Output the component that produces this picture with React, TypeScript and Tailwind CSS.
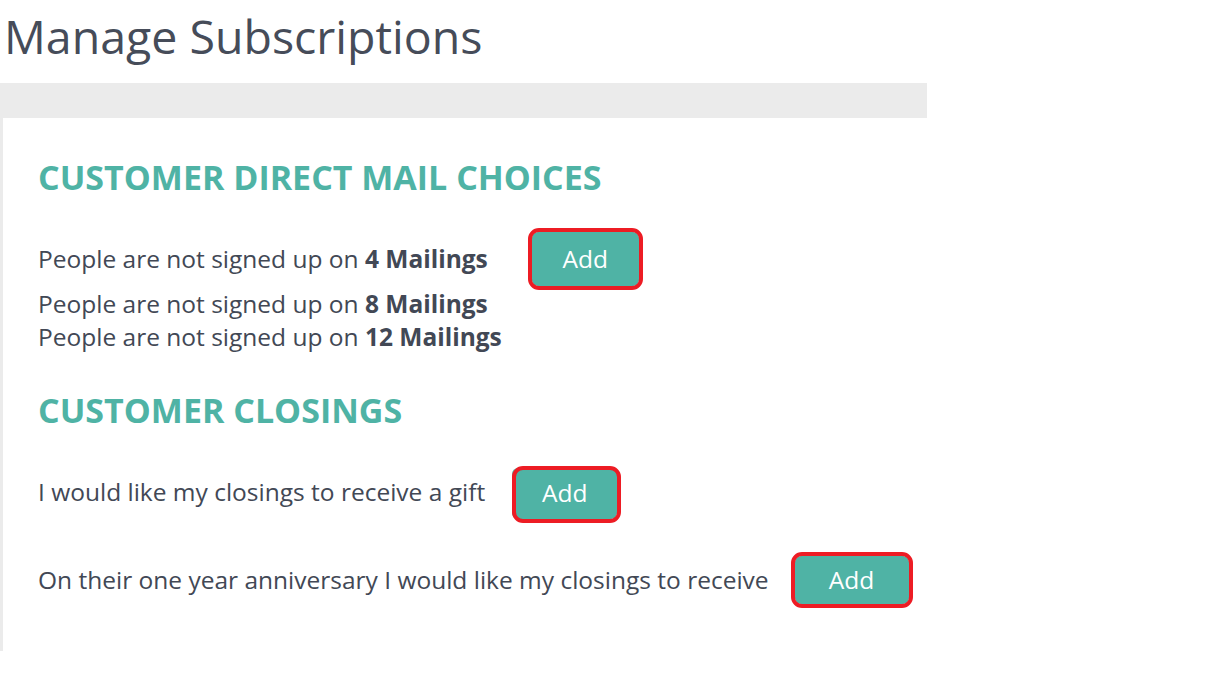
const rows = [4, 8, 12];

interface AddButtonProps {
  size: string;
  ring: string;
  className?: string;
}

function AddButton({ size, ring, className = "" }: AddButtonProps) {
  return (
    <span className={`relative inline-flex shrink-0 ${className}`}>
      <button
        type="button"
        className={`${size} rounded-[6px] bg-[#4fb3a5] text-[24.5px] leading-none text-white`}
      >
        Add
      </button>
      {/* red highlight drawn around the button */}
      <span
        className={`pointer-events-none absolute rounded-[11px] border-[4px] border-[#ed1c24] ${ring}`}
      />
    </span>
  );
}

export default function App() {
  return (
    <div className="h-[691px] w-[1228px] bg-white font-['Open_Sans',sans-serif] text-[#424855]">
      <h1 className="h-[83px] pl-[4px] pt-[4px] text-[46.5px] font-normal leading-[64px] text-[#464c59]">
        Manage Subscriptions
      </h1>

      <div className="h-[568px] w-[927px] overflow-hidden">
        <div className="h-[35px] bg-[#ebebeb]" />
        <div className="h-[533px] border-l-[3px] border-[#ebebeb] pl-[35px] pt-[39px]">
          <h2 className="text-[34px] font-bold leading-[40px] text-[#4fb3a5]">
            CUSTOMER DIRECT MAIL CHOICES
          </h2>

          <div className="mt-[35px] flex items-start">
            <p className="mt-[11.5px] text-[24.5px] leading-[30px]">
              People are not signed up on <b className="font-bold">4 Mailings</b>
            </p>
            <AddButton
              size="h-[54px] w-[107px]"
              ring="-inset-[4px]"
              className="ml-[44px]"
            />
          </div>
          <div className="mt-[3px] flex flex-col gap-[3px]">
            {rows.slice(1).map((n) => (
              <p key={n} className="text-[24.5px] leading-[30px]">
                People are not signed up on <b className="font-bold">{n} Mailings</b>
              </p>
            ))}
          </div>

          <h2 className="mt-[37.5px] text-[34px] font-bold leading-[40px] text-[#4fb3a5]">
            CUSTOMER CLOSINGS
          </h2>

          <div className="mt-[38.5px] flex items-start">
            <p className="mt-[9px] text-[24.5px] leading-[30px]">I would like my closings to receive a gift</p>
            <AddButton
              size="h-[51px] w-[105px]"
              ring="-top-[2px] left-0 -right-[4px] -bottom-[4px]"
              className="ml-[27px]"
            />
          </div>

          <div className="mt-[37px] flex items-start">
            <p className="mt-[8.5px] text-[24.5px] leading-[30px]">
              On their one year anniversary I would like my closings to receive
            </p>
            <AddButton
              size="h-[48px] w-[114px]"
              ring="-inset-[4px]"
              className="ml-[26px]"
            />
          </div>

          <p className="mt-[40.5px] text-[24.5px] leading-[30px]">
            I would like to send a <span className="text-[#4fb3a5]">holiday card</span> to my closings
          </p>
        </div>
      </div>
    </div>
  );
}
